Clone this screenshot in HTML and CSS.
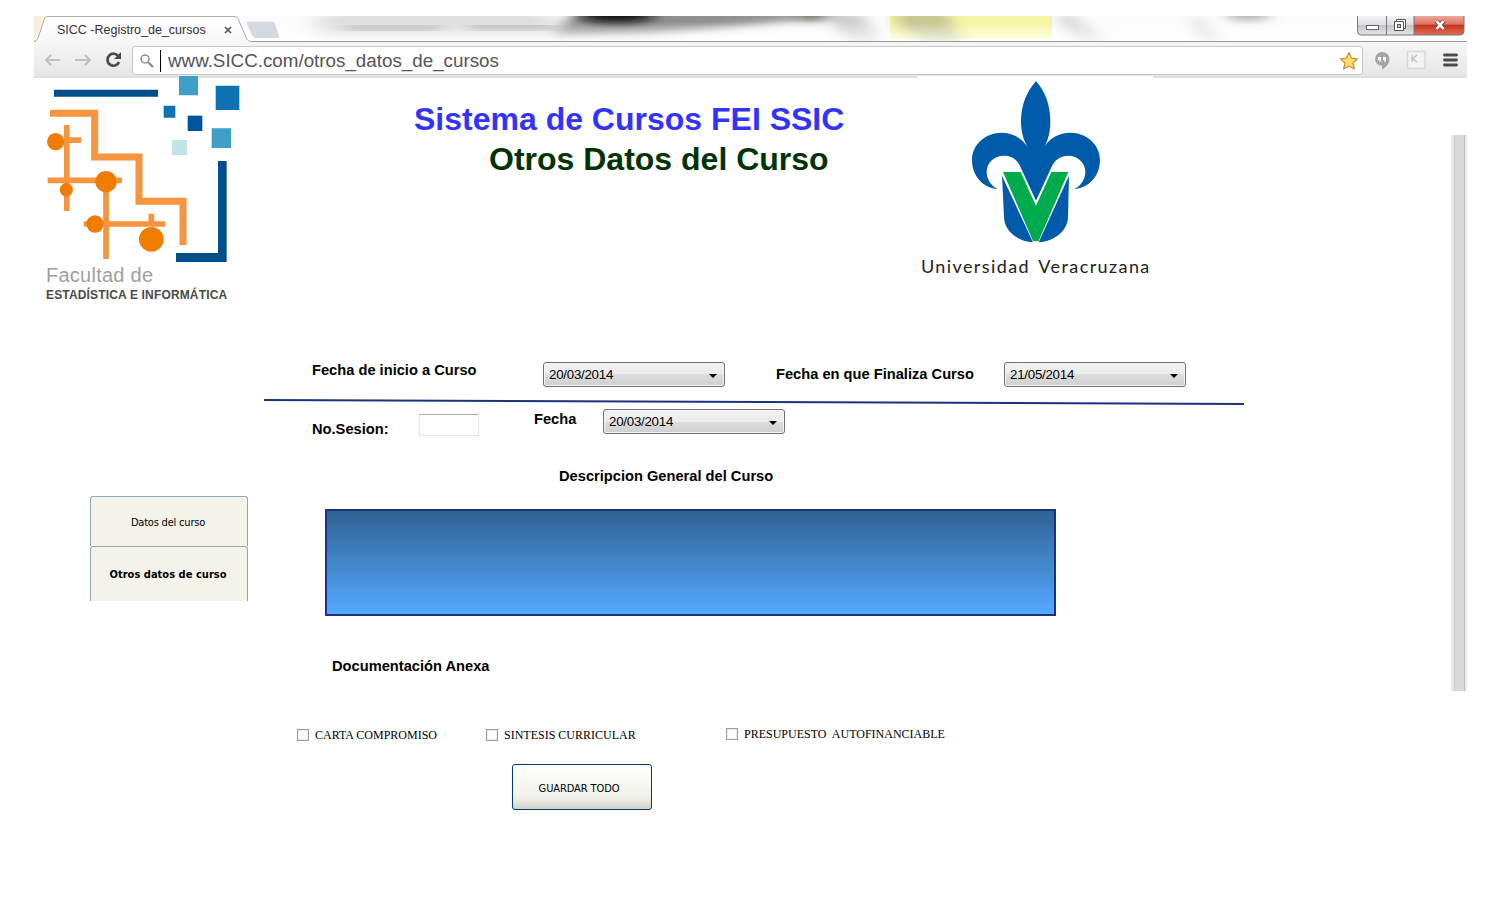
FILE: index.html
```html
<!DOCTYPE html>
<html lang="es">
<head>
<meta charset="utf-8">
<title>SICC - Registro de cursos</title>
<link rel="stylesheet" href="styles.css">
</head>
<body>
<div class="browser">
  <div class="tabstrip">
    <svg class="glass" width="1433" height="26" viewBox="34 16 1433 26">
      <defs>
        <filter id="soft" x="-30%" y="-60%" width="160%" height="220%"><feGaussianBlur stdDeviation="12 5"/></filter>
        <filter id="fine" x="-40%" y="-100%" width="180%" height="300%"><feGaussianBlur stdDeviation="8 4"/></filter>
        <linearGradient id="fade" x1="0" y1="0" x2="0" y2="1"><stop offset="0" stop-color="#fff" stop-opacity="0"/><stop offset="1" stop-color="#fff" stop-opacity=".75"/></linearGradient>
        <linearGradient id="tabFill" x1="0" y1="0" x2="0" y2="1"><stop offset="0" stop-color="#fff"/><stop offset="1" stop-color="#f7f7f7"/></linearGradient>
      </defs>
      <rect x="34" y="16" width="1433" height="26" fill="#fcfcfc"/>
      <rect x="318" y="12" width="235" height="26" fill="#dedede" filter="url(#soft)"/>
      <path d="M345 29H440M470 27H555" stroke="#a5a5a5" stroke-width="7" filter="url(#fine)"/>
      <path d="M580 8H840L800 20L720 28L650 34L550 37Z" fill="#8f8f8f" filter="url(#fine)"/>
      <ellipse cx="617" cy="14" rx="38" ry="9" fill="#101010" filter="url(#fine)"/>
      <path d="M820 10H860L882 46H850Z" fill="#cfcfcf" filter="url(#fine)"/>
      <ellipse cx="813" cy="14" rx="16" ry="7" fill="#74746a" filter="url(#fine)"/>
      <rect x="890" y="16" width="162" height="23" fill="#f6f7a4"/>
      <path d="M897 8H945L962 46H930L897 26Z" fill="#c6c892" filter="url(#fine)"/>
      <path d="M1065 8L1110 46H1080L1058 20Z" fill="#d8d8d8" filter="url(#fine)"/>
      <path d="M1190 8L1225 46H1200Z" fill="#dcdcdc" filter="url(#fine)"/>
      <ellipse cx="1248" cy="14" rx="22" ry="6" fill="#a4a4a4" filter="url(#fine)"/>
      <rect x="34" y="22" width="1433" height="20" fill="url(#fade)"/>
      <path d="M34 16H46L34 42Z" fill="#f4eedb"/>
      <path d="M34 41.5H1467" stroke="#999"/>
      <path d="M34 42C37 42 38 38 39 35L44 20C45 17 46 16.500 49 16.500H234C237 16.500 238 18 239 21L246 37C247 40 248 41.500 252 41.500V43H34Z" fill="url(#tabFill)"/>
      <path d="M34 41.500C37 41 38 38 39 35L44 20C45 17 46 16.500 49 16.500H234C237 16.500 238 18 239 21L246 37C247 40 248 41.500 252 41.500" fill="none" stroke="#aaa"/>
      <path d="M249 21.500H271C273 21.500 274 22 275 24L279 36C279.500 37.500 279 38 277 38H256C254 38 253 37 252 35L247 24C246.500 22 247 21.500 249 21.500Z" fill="#d3dae2"/>
    </svg>
    <span class="tab-title">SICC -Registro_de_cursos</span>
    <svg class="tab-close" width="8" height="8" viewBox="0 0 8 8"><path d="M1 1L7 7M7 1L1 7" stroke="#555" stroke-width="1.700"/></svg>
    <svg class="window-buttons" width="109" height="20" viewBox="0 0 109 20">
      <defs>
        <linearGradient id="grey" x1="0" y1="0" x2="0" y2="1"><stop offset="0" stop-color="#f3f3f5"/><stop offset=".45" stop-color="#dedfe2"/><stop offset=".5" stop-color="#c3c5ca"/><stop offset="1" stop-color="#e4e5e8"/></linearGradient>
        <linearGradient id="red" x1="0" y1="0" x2="0" y2="1"><stop offset="0" stop-color="#eda99b"/><stop offset=".42" stop-color="#dc7664"/><stop offset=".5" stop-color="#c8321f"/><stop offset="1" stop-color="#e27055"/></linearGradient>
      </defs>
      <path d="M1.500 0V15Q1.500 19 5.500 19H58V0Z" fill="url(#grey)"/>
      <path d="M58 0V19H104Q108 19 108 15V0Z" fill="url(#red)"/>
      <path d="M1.500 0V15Q1.500 19 5.500 19H104Q108 19 108 15V0M30.500 0V19M58 0V19" fill="none" stroke="#77777f"/>
      <rect x="10.500" y="9.500" width="12" height="4" fill="#fff" stroke="#666"/>
      <path d="M40.500 3.500H49.500V12.500H40.500Z" fill="#fff" stroke="#555"/>
      <path d="M38.500 5.500H47.500V14.500H38.500Z" fill="#fff" stroke="#555"/>
      <rect x="41.500" y="8.500" width="3" height="3" fill="#ccc" stroke="#555"/>
      <path d="M80 5L88 13M88 5L80 13" stroke="#77554f" stroke-width="4.500"/>
      <path d="M80.500 5L87.500 13M87.500 5L80.500 13" stroke="#fff" stroke-width="2.600"/>
    </svg>
  </div>

  <div class="toolbar">
    <svg class="nav" width="88" height="22" viewBox="0 0 88 22" fill="none">
      <path d="M26 11H12M17 6L12 11L17 16" stroke="#c0c0c0" stroke-width="2"/>
      <path d="M41 11H56M51 6L56 11L51 16" stroke="#c0c0c0" stroke-width="2"/>
      <path d="M84.500 7.500A6 6 0 1 0 85 13" stroke="#4b4b4b" stroke-width="2.700"/>
      <path d="M87 3V10H80Z" fill="#4b4b4b"/>
    </svg>
    <div class="address">
      <svg width="14" height="14" viewBox="0 0 14 14"><circle cx="5" cy="5" r="4" fill="none" stroke="#8b8b8b" stroke-width="1.500"/><path d="M8 8L13 13" stroke="#8b8b8b" stroke-width="2.200"/></svg>
      <span class="caret"></span>
      <span class="url">www.SICC.com/otros_datos_de_cursos</span>
      <svg class="star" width="20" height="20" viewBox="0 0 20 20"><path d="M10 1.500L12.500 7.200L18.600 7.800L14 12L15.300 18L10 15L4.700 18L6 12L1.400 7.800L7.500 7.200Z" fill="#fddc6a" stroke="#c9973a" stroke-width="1.300" stroke-linejoin="round"/></svg>
    </div>
    <svg class="extensions" width="90" height="22" viewBox="0 0 90 22">
      <path d="M10 3A7.500 7 0 0 0 8 16.500H10V20.500C14 18 17.500 15 17.500 10A7.500 7 0 0 0 10 3Z" fill="#a5a5a5"/>
      <path d="M6 8H9V12L7.500 13.500V11H6ZM11 8H14V12L12.500 13.500V11H11Z" fill="#fff"/>
      <path d="M35.500 2.500H53V19.500H35.500Z" fill="#f4f4f4" stroke="#d8d8d8" stroke-width="1.500"/>
      <path d="M40 6V13M45 6L40.500 9.500L45 13" fill="none" stroke="#c0c0c0" stroke-width="1.300"/>
      <path d="M72.500 6H84.500M72.500 11H84.500M72.500 16H84.500" stroke="#4a4a4a" stroke-width="2.800" stroke-linecap="round"/>
    </svg>
  </div>

  <div class="viewport">
    <main class="page">
      <header class="masthead">
        <div class="faculty">
          <svg width="194" height="187" viewBox="48 18 582 561">
            <path d="M72 59H384V80H72ZM564 273H590V576H438V549H564Z" fill="#004e8c"/>
            <path d="M447 18H504V76H447ZM545 175H603V234H545Z" fill="#409fc8"/>
            <path d="M557 47H628V120H557ZM401 107H436V143H401Z" fill="#0f72b3"/>
            <path d="M473 137H517V183H473Z" fill="#00549e"/>
            <path d="M426 210H471V255H426Z" fill="#c2e3ea"/>
            <path d="M60 130H194V261H327V394H459V525" fill="none" stroke="#f5953f" stroke-width="21"/>
            <path d="M110.500 165V423M110 210.500H153M53 331H276M228 335V567M161 462H406M364 431V470" fill="none" stroke="#f5953f" stroke-width="17"/>
            <g fill="#f17d00"><circle cx="77" cy="215" r="26"/><circle cx="228" cy="335" r="32"/><circle cx="109" cy="359" r="20"/><circle cx="195" cy="462" r="26"/><circle cx="364" cy="508" r="37"/></g>
          </svg>
          <span class="faculty-top">Facultad de</span>
          <span class="faculty-name">ESTADÍSTICA E INFORMÁTICA</span>
        </div>
        <div class="titles">
          <h1>Sistema de Cursos FEI SSIC</h1>
          <h2>Otros Datos del Curso</h2>
        </div>
        <div class="university">
          <svg width="235" height="170" viewBox="24 18 705 510">
            <path d="M378 33C350 65 333 105 333 155C333 185 341 210 353 233C338 205 308 188 275 188C225 188 186 225 186 270C186 320 222 355 263 357C240 345 230 325 230 305C230 278 252 257 282 257C308 257 325 272 333 295L378 392L423 295C431 272 450 257 475 257C503 257 526 278 526 305C526 325 516 345 493 357C534 355 570 320 570 270C570 225 531 188 481 188C448 188 418 205 405 228C415 205 421 185 421 155C421 105 406 65 378 33Z" fill="#005bab"/>
            <path d="M276 317L369 517C320 514 282 480 282 440ZM477 317L386 517C435 514 474 480 474 440Z" fill="#005bab"/>
            <path d="M279 306H332L378 407L424 306H475L386 513H369Z" fill="#00ab4e"/>
          </svg>
          <span class="university-name">Universidad Veracruzana</span>
        </div>
      </header>

      <div class="workspace">
        <nav class="side-tabs">
          <a class="side-tab">Datos del curso</a>
          <a class="side-tab current">Otros datos de curso</a>
        </nav>
        <section class="form">
          <div class="dates">
            <span class="label start-label">Fecha de inicio a Curso</span>
            <div class="select start">20/03/2014<i class="arrow"></i></div>
            <span class="label end-label">Fecha en que Finaliza Curso</span>
            <div class="select">21/05/2014<i class="arrow"></i></div>
          </div>
          <svg class="rule" width="980" height="8" viewBox="0 0 980 8"><path d="M0 2L980 6" stroke="#1b3281" stroke-width="2"/></svg>
          <div class="session">
            <span class="label session-label">No.Sesion:</span>
            <span class="input"></span>
            <span class="label date-label">Fecha</span>
            <div class="select">20/03/2014<i class="arrow"></i></div>
          </div>
          <span class="label description-label">Descripcion General del Curso</span>
          <div class="description"></div>
          <span class="label docs-label">Documentación Anexa</span>
          <div class="docs">
            <span class="check carta"><i class="box"></i>CARTA COMPROMISO</span>
            <span class="check sintesis"><i class="box"></i>SINTESIS CURRICULAR</span>
            <span class="check presupuesto"><i class="box"></i>PRESUPUESTO&nbsp; AUTOFINANCIABLE</span>
          </div>
          <div class="save">GUARDAR TODO</div>
        </section>
      </div>
    </main>
    <div class="scrollbar"></div>
  </div>
</div>
</body>
</html>
```
FILE: styles.css
```css
* { box-sizing: border-box; }
body { margin: 0; background: #fff; color: #000; font-family: "Liberation Sans", Arial, sans-serif; overflow: hidden; }
svg { display: block; flex: none; }
h1, h2 { margin: 0; }
span, a, .select { white-space: nowrap; }

.browser { width: 1433px; margin: 16px 33px 0 34px; }

/* Browser frame */
.tabstrip { position: relative; display: flex; height: 26px; padding-left: 23px; }
.glass { position: absolute; left: 0; top: 0; }
.tab-title { position: relative; width: 167px; padding-top: 7px; font-size: 12.5px; line-height: 15px; color: #333; }
.tab-close { position: relative; margin-top: 10px; }
.window-buttons { position: relative; margin: 0 2px 0 auto; }
.toolbar { display: flex; height: 36px; padding-top: 4px; background: linear-gradient(#f6f6f6, #e6e6e6); border-bottom: 2px solid #e0e0e0; }
.nav { margin-top: 3px; }
.address { display: flex; align-items: center; width: 1231px; height: 29px; margin-left: 10px; padding: 0 3px 0 7px; background: #fff; border: 1px solid #c8c8c8; border-radius: 3px; }
.caret { width: 1px; height: 22px; margin-left: 6px; background: #000; }
.url { margin-left: 7px; font-size: 18.8px; line-height: 20px; color: #555; }
.star { margin-left: auto; }
.extensions { margin: 3px 0 0 9px; }

/* Page */
.viewport { display: flex; position: relative; margin-top: -2px; }
.page { width: 1417px; }
.scrollbar { width: 16px; height: 556px; margin-top: 59px; background: linear-gradient(90deg, #e9e9e9 0 3px, #cacaca 3px 4px, #d9d9d9 4px 13px, #bbb 13px 14px, #ececec 14px); }
.masthead { display: flex; height: 270px; padding-left: 12px; }
.faculty { display: flex; flex-direction: column; width: 194px; }
.faculty-top { margin-top: 1px; font-size: 20px; line-height: 22px; letter-spacing: .25px; color: #a0a0a0; }
.faculty-name { margin-top: 2px; font-size: 12px; line-height: 14px; font-weight: bold; letter-spacing: .16px; color: #4a4a4a; }
.titles { width: 504px; padding: 23px 0 0 174px; }
.titles h1, .titles h2 { font-size: 32px; line-height: 40px; white-space: nowrap; }
.titles h1 { color: #33f; }
.titles h2 { padding-left: 75px; color: #030; }
.university { display: flex; flex-direction: column; width: 235px; margin-left: 174px; background: #fff; }
.university-name { margin: 9px 0 0 3px; font-family: Lato, sans-serif; font-size: 18px; line-height: 22px; letter-spacing: 1.4px; word-spacing: 3px; color: #222; }

.workspace { display: flex; padding-left: 56px; }
.side-tabs { width: 158px; margin-top: 150px; font-family: "DejaVu Sans Condensed", "DejaVu Sans", sans-serif; font-size: 11px; }
.side-tab { display: flex; align-items: center; justify-content: center; height: 50px; padding: 2px 2px 0 0; background: #f3f3ea; border: 1px solid #91a7b4; border-bottom: 0; border-radius: 3px 3px 0 0; letter-spacing: -.2px; }
.side-tab.current { height: 55px; padding-top: 0; font-weight: bold; letter-spacing: .03px; }
.form { width: 980px; margin-left: 16px; padding-top: 16px; }
.label { font-size: 14.67px; line-height: 16px; font-weight: bold; }
.dates { display: flex; height: 36px; padding-left: 48px; }
.start-label { width: 231px; }
.end-label { width: 228px; margin-left: 51px; padding-top: 4px; }
.select { display: flex; align-items: center; justify-content: space-between; width: 182px; height: 25px; padding: 0 7px 0 5px; border: 1px solid #707070; border-radius: 3px; background: linear-gradient(#f2f2f2, #ebebeb 50%, #dddddd 50%, #cfcfcf); box-shadow: inset 0 0 0 1px #f6f6f6; font-size: 13.3px; letter-spacing: -.25px; }
.arrow { margin-top: 3px; border: 4px solid transparent; border-top-color: #000; border-bottom: 0; }
.session { display: flex; height: 61px; padding: 3px 0 0 48px; }
.session-label { width: 107px; padding-top: 12px; }
.input { width: 60px; height: 22px; margin-top: 5px; background: #fff; border: 1px solid #e2e3ea; border-top-color: #abadb3; border-radius: 1px; }
.date-label { width: 69px; margin-left: 55px; padding-top: 2px; }
.description-label { display: block; margin: 1px 0 0 295px; }
.description { width: 731px; height: 107px; margin: 25px 0 0 61px; border: 2px solid #1b3281; background: linear-gradient(#306295, #54a9ff); }
.docs-label { display: block; margin: 42px 0 0 68px; }
.docs { display: flex; margin-top: 54px; padding-left: 33px; font-family: "Liberation Serif", serif; font-size: 12px; line-height: 14px; }
.check { display: flex; align-items: flex-start; gap: 6px; }
.box { width: 12px; height: 12px; margin-top: 1px; border: 1px solid #a69c8f; background: #fff; box-shadow: inset 0 0 0 1px #eee; }
.carta { width: 189px; }
.sintesis { width: 240px; }
.presupuesto { margin-top: -1px; }
.save { display: flex; align-items: center; justify-content: center; width: 140px; height: 46px; margin: 22px 0 0 248px; padding: 2px 6px 0 0; border: 1px solid #003c74; border-radius: 3px; background: linear-gradient(#fff, #f0f0ea 75%, #d6d0c5); font-family: "DejaVu Sans Condensed", "DejaVu Sans", sans-serif; font-size: 11px; letter-spacing: -.1px; }
```
